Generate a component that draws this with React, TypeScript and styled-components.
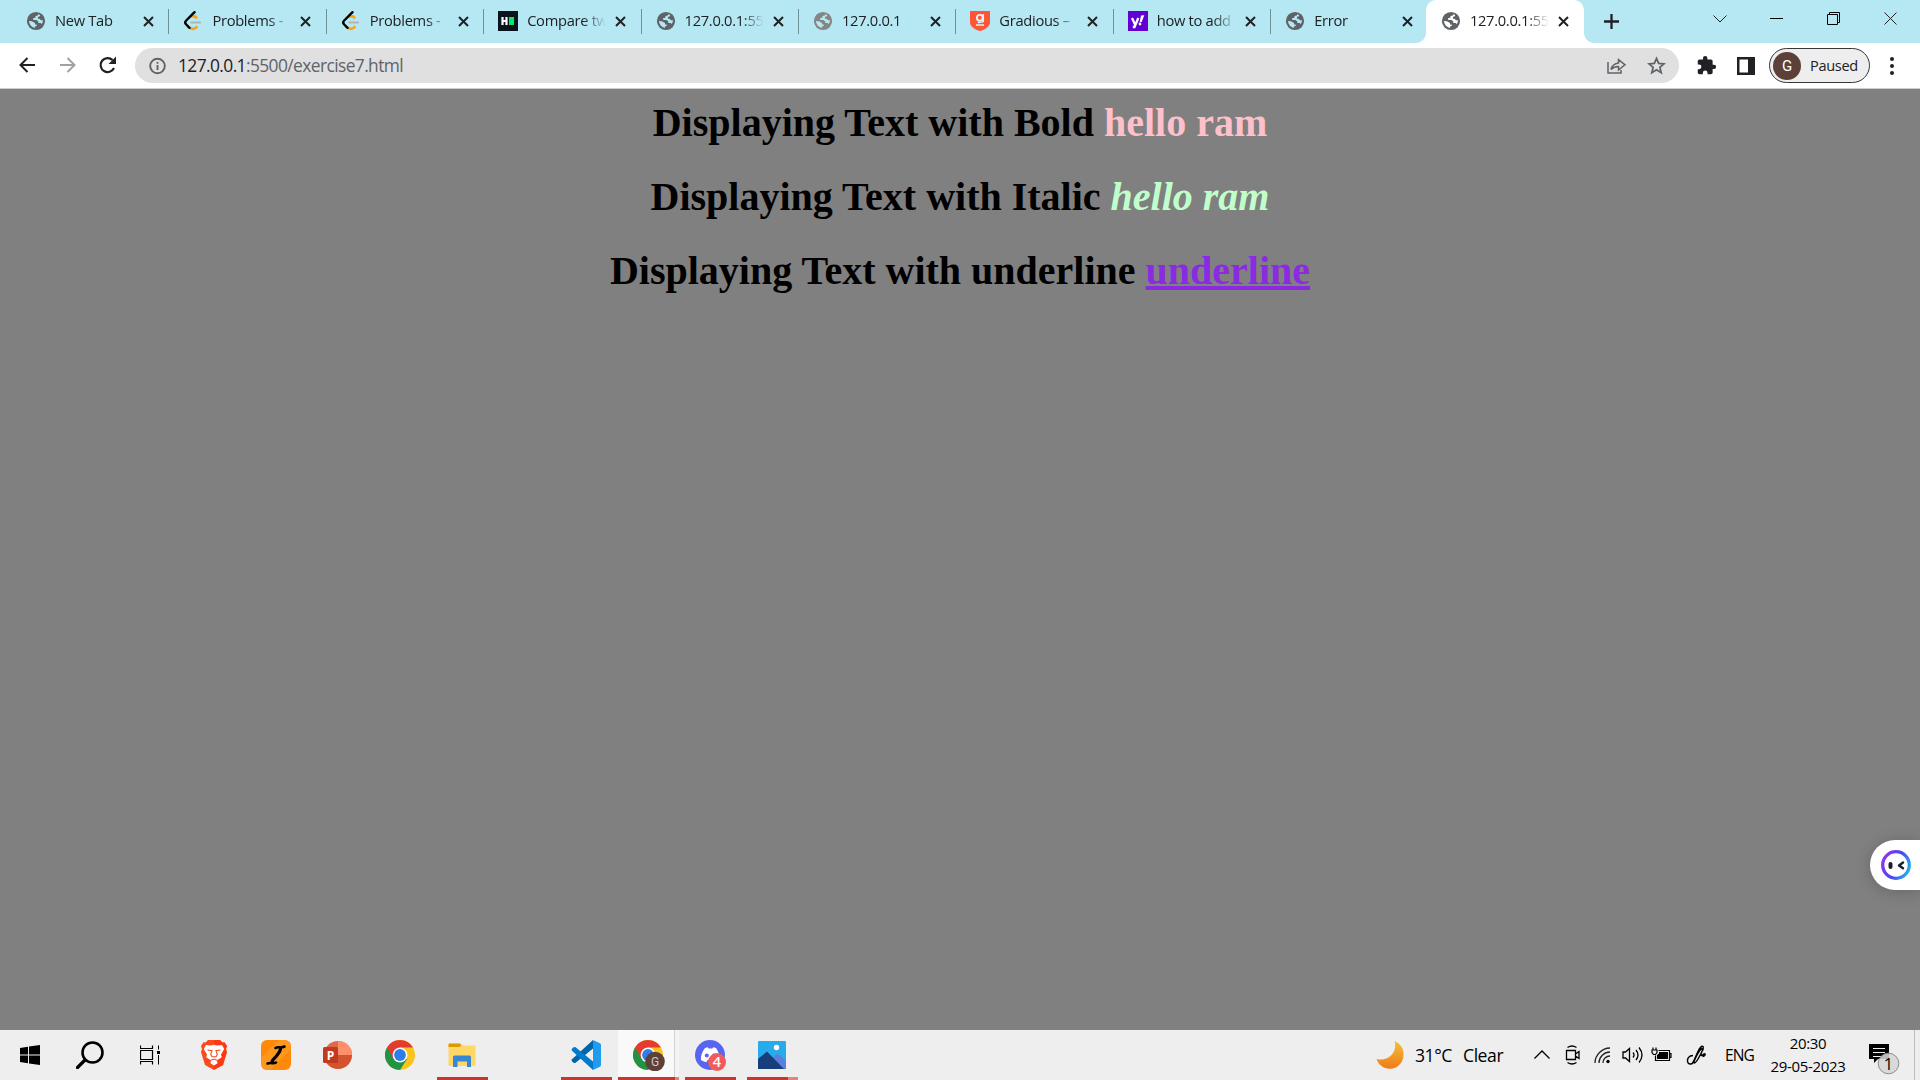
import React from "react";
import styled, { createGlobalStyle } from "styled-components";

const ui = `"Open Sans", "Noto Sans", "Liberation Sans", sans-serif`;

const Global = createGlobalStyle`
  * { box-sizing: border-box; }
  html, body { margin: 0; padding: 0; overflow: hidden; }
  svg { display: block; flex: none; }
`;

const Screen = styled.div`
  width: 1920px; height: 1080px; display: flex; flex-direction: column;
  background: #808080; font-family: ${ui}; color: #202124; position: relative; overflow: hidden;
`;
const TabStrip = styled.div`
  height: 43px; flex: none; display: flex; align-items: stretch; padding-left: 11px; background: #b5e8f3;
`;
const Tab = styled.div<{ $active?: boolean }>`
  width: ${(p) => (p.$active ? 158 : 157.4)}px; flex: none; display: flex; align-items: center;
  padding-left: 15px; padding-bottom: 1px; position: relative;
  background: ${(p) => (p.$active ? "#fff" : "transparent")};
  border-radius: 10px 10px 0 0;
  margin-left: ${(p) => (p.$active ? -1.6 : 0)}px;
`;
const Divider = styled.i`
  position: absolute; right: -1px; top: 9px; width: 1px; height: 25px; background: #6f8f96;
`;
const Flare = styled.i<{ $side: "left" | "right" }>`
  position: absolute; bottom: 0; width: 10px; height: 10px;
  ${(p) => (p.$side === "left" ? "left: -10px;" : "right: -10px;")}
  background: radial-gradient(circle at ${(p) => (p.$side === "left" ? "0 0" : "100% 0")}, #b5e8f3 9.5px, #fff 10.2px);
`;
const TabTitle = styled.span`
  width: 79px; margin-left: 9px; overflow: hidden; white-space: nowrap; font-size: 14.7px;
  line-height: 22px; letter-spacing: -0.3px; padding-bottom: 2px;
  mask-image: linear-gradient(90deg, #000 56px, transparent 79px);
`;
const CloseSlot = styled.span`display: flex; margin-left: 9px; padding-top: 1px;`;
const NewTab = styled.div`display: flex; align-items: center; margin-left: 20px;`;
const WindowButtons = styled.div`
  margin-left: auto; display: flex; height: 37px; align-items: center;
`;
const WindowButton = styled.div`
  width: 57.2px; display: flex; justify-content: center;
`;

const Toolbar = styled.div`
  height: 46px; flex: none; background: #fff; border-bottom: 1px solid #cdcdcd; display: flex;
  align-items: center; padding: 0 17px 0 16px;
`;
const NavButton = styled.div`width: 40px; display: flex; padding-bottom: 1px;`;
const Omnibox = styled.div`
  width: 1544px; height: 35px; border-radius: 18px; background: #e0e0e0; display: flex; align-items: center;
  padding: 0 13px; margin-left: -1px;
`;
const Url = styled.span`
  margin-left: 12px; flex: 1; font-size: 17.4px; letter-spacing: -0.6px; line-height: 24px; padding-bottom: 1px;
  color: #5f6368; white-space: nowrap;
  b { font-weight: 400; color: #202124; }
`;
const OmniIcons = styled.div`display: flex; gap: 20px; align-items: center;`;
const Actions = styled.div`display: flex; align-items: center; gap: 13px; margin-left: 17px;`;
const PanelIcon = styled.svg`margin-left: 7px;`;
const Profile = styled.div`
  margin-left: 1px; width: 101px; height: 35px; border: 1.5px solid #35383b; border-radius: 18px; background: #eee;
  display: flex; align-items: center; padding-left: 3px; 
`;
const ProfileState = styled.span`
  font-size: 14.6px; letter-spacing: -0.35px; line-height: 20px; padding-bottom: 2px;
`;
const Avatar = styled.span`
  width: 28px; height: 28px; border-radius: 50%; background: #5d4037; color: #fff; margin-right: 9px;
  display: flex; align-items: center; justify-content: center; font: 15px Roboto, sans-serif;
`;
const Dots = styled.div`
  margin-left: 7px; display: flex; flex-direction: column; gap: 3px;
  i { width: 4px; height: 4px; border-radius: 50%; background: #202124; }
`;

const Page = styled.main`
  flex: 1; padding-top: 11px; font-family: "Liberation Serif", serif; text-align: center; color: #000;
`;
const Heading = styled.h1`
  margin: 0 0 28px; font-size: 40px; line-height: 46px; font-weight: 700;
`;
const Tint = styled.span<{ $color: string }>`color: ${(p) => p.$color};`;

const Assistant = styled.div`
  position: absolute; right: 0; top: 840px; width: 50px; height: 50px; border-radius: 25px 0 0 25px; background: #fff;
  display: flex; align-items: center; padding-left: 11px; box-shadow: 0 2px 16px rgba(0, 0, 0, 0.2);
`;

const Taskbar = styled.footer`
  height: 50px; flex: none; background: #eee; display: flex; color: #000;
`;
const Launcher = styled.div<{ $w?: number }>`
  width: ${(p) => p.$w ?? 62}px; flex: none; display: flex; align-items: center; justify-content: center;
`;
const Running = styled(Launcher)<{ $bar: number; $more?: number; $on?: boolean }>`
  position: relative;
  ${(p) => p.$on && "background: linear-gradient(90deg, #f9f9f9 56px, #d2d2d2 56px, #d2d2d2 57px, #f3f3f3 57px); padding-left: 2px;"}
  &::after {
    content: ""; position: absolute; bottom: 0; width: ${(p) => p.$bar + (p.$more ?? 0)}px; height: 3px;
    left: calc(50% - ${(p) => (p.$bar + (p.$more ?? 0)) / 2}px);
    background: linear-gradient(90deg, #c8372b ${(p) => p.$bar}px, #e0857d ${(p) => p.$bar}px);
  }
`;
const StartGroup = styled.div`display: flex; margin-right: 3px;`;
const Tray = styled.div`margin-left: auto; display: flex; align-items: center; white-space: nowrap;`;
const Weather = styled.div`
  display: flex; align-items: center; font-size: 17.6px; line-height: 24px; letter-spacing: -0.45px; width: 158px;
`;
const Temp = styled.span`margin-left: 11px; width: 48px;`;
const TrayIcons = styled.div`
  display: grid; grid-template-columns: 31px 29px 28px 29px 35px 39px; align-items: center; width: 191px;
`;
const Lang = styled.div`font-size: 15.6px; letter-spacing: -0.9px; width: 45px;`;
const Clock = styled.div`
  width: 76px; font-size: 15px; line-height: 23px; letter-spacing: -0.35px;
  display: flex; flex-direction: column; align-items: center;
`;
const Notice = styled.div`margin-left: 23px; width: 45px; padding-top: 10px;`;
const ShowDesktop = styled.div`width: 6px; height: 50px; border-left: 1px solid #bdbdbd;`;

const Globe = ({ c = "#5f6368", land = "#b5e8f3" }: { c?: string; land?: string }) => (
  <svg width="20" height="20" viewBox="0 0 20 20">
    <circle cx="10" cy="10" r="9.100" fill={c} />
    <path d="M12.200 3.200 11.800 4.600 9.600 5 9.300 6.700 7 7.200 7.300 8.900H10.600l1.700 1.500v1.700h2.600l.8 1.200A7 7 0 0 0 17 9.300l-2-.1-1.500-1.500h-1.600V6l1.900-.7.400-1.200z" fill={land} />
    <path d="M3 10 5.800 10.200 9 11.900v1.600H10.700V15l-1.800.6v1.400A7.100 7.100 0 0 1 3 10z" fill={land} />
  </svg>
);
const Leet = () => (
  <svg width="20" height="20" viewBox="0 0 20 20" fill="none" strokeWidth="2.2">
    <path d="M7.800 6.200c2-1.800 4-1.400 6.200 1.200" stroke="#f9a11b" strokeWidth="2.600" />
    <path d="M14.200 15.200c-2 3-5.300 3.600-7.600 1.200" stroke="#f9a11b" strokeWidth="2.600" />
    <path d="M11.500 1.200 3.200 9.500c-1.300 1.300-1.300 2.700 0 4l3.300 3.300" stroke="#000" strokeWidth="2.400" strokeLinecap="round" />
    <path d="M8.500 11.500H17" stroke="#b3b3b3" strokeLinecap="round" />
  </svg>
);
const Hacker = () => (
  <svg width="20" height="20">
    <rect width="20" height="20" fill="#0b141d" />
    <path d="M4.500 6v8M8.500 6v8M4.500 10h4" stroke="#fff" strokeWidth="2.200" />
    <path d="M11 6h5v8h-5z" fill="#00ea64" />
  </svg>
);
const Gradious = () => (
  <svg width="20" height="20" fill="none">
    <path d="M0 0h20v11c0 5-5 7.500-10 9C5 18.500 0 16 0 11z" fill="#ff5436" />
    <circle cx="9.800" cy="6.800" r="2.900" stroke="#d6f2f6" strokeWidth="1.900" />
    <path d="M13.200 3v7.500c-1 1-4 .8-5.500.8M6 14h8" stroke="#d6f2f6" strokeWidth="1.700" />
  </svg>
);
const Yahoo = () => (
  <svg width="20" height="20">
    <rect width="20" height="20" fill="#6001d2" />
    <path d="m4 7 3 6.500M10.300 7 6.500 16H4.800" stroke="#fff" strokeWidth="2.300" fill="none" />
    <path d="m13 4.500 3.300-.3-2.600 6.800h-2z" fill="#fff" />
    <circle cx="12" cy="13" r="1.400" fill="#fff" />
  </svg>
);
const Close = () => (
  <svg width="11" height="11" stroke="#202124" strokeWidth="2"><path d="m1 1 9 9M10 1l-9 9" /></svg>
);

const tabs: { icon: React.ReactNode; title: string; active?: boolean }[] = [
  { icon: <Globe />, title: "New Tab" },
  { icon: <Leet />, title: "Problems -" },
  { icon: <Leet />, title: "Problems -" },
  { icon: <Hacker />, title: "Compare tw" },
  { icon: <Globe />, title: "127.0.0.1:55" },
  { icon: <Globe c="#858585" />, title: "127.0.0.1" },
  { icon: <Gradious />, title: "Gradious –" },
  { icon: <Yahoo />, title: "how to add" },
  { icon: <Globe />, title: "Error" },
  { icon: <Globe land="#fff" />, title: "127.0.0.1:55", active: true },
];

const ChromeIcon = ({ badge }: { badge?: boolean }) => (
  <svg width={badge ? 33 : 30} height="32" viewBox={badge ? "0 0 33 32" : "0 0 30 32"}>
    <circle cx="15" cy="16" r="15" fill="#fcc31e" />
    <path d="M15 16 2 8.500A15 15 0 0 0 15 31l7-11z" fill="#229342" />
    <path d="M2 8.500A15 15 0 0 1 28 8.500H15L8.500 19.700z" fill="#e33b2e" />
    <circle cx="15" cy="16" r="7.400" fill="#fff" />
    <circle cx="15" cy="16" r="5.900" fill="#2f7de9" />
    {badge && (
      <>
        <circle cx="22" cy="22.500" r="9.800" fill="#5d4037" />
        <text x="22" y="27" textAnchor="middle" fontSize="12" fontFamily="Roboto" fill="#d0c8c5">G</text>
      </>
    )}
  </svg>
);
const WindowsIcon = () => (
  <svg width="20" height="20"><path d="M0 3 8 1.800V9.500H0zM9 1.600 20 0v9.500H9zM0 10.500h8v7.700L0 17zM9 10.500h11V20L9 18.400z" /></svg>
);
const SearchIcon = () => (
  <svg width="28" height="28" fill="none" stroke="#000"><circle cx="16.500" cy="11.500" r="10" strokeWidth="2.600" /><path d="m9 19-7.500 7.500" strokeWidth="3.200" strokeLinecap="round" /></svg>
);
const TaskViewIcon = () => (
  <svg width="20" height="20" fill="none" stroke="#000">
    <path d="M.5.500v3h12v-3M.5 19.500v-3h12v3M.5 5.500h12v9H.5z" strokeWidth="1.200" />
    <path d="M18.500.500v4M18.500 10v9.500" /><path d="M17 6h3v3h-3z" fill="#000" stroke="none" />
  </svg>
);
const BraveIcon = () => (
  <svg width="26" height="30" viewBox="0 0 26 30">
    <path d="M7 0h12l2.500 2.600 2-.3L26 6l-1 3 1 3-4 13-9 5-9-5L0 12l1-3-1-3 2.500-3.700 2 .3z" fill="#fb4a1c" />
    <path d="M19 0l2.500 2.600 2-.3L26 6l-1 3 1 3-4 13-9 5V0z" fill="#ff2b0c" opacity=".55" />
    <path d="m5 5 5 .6 3-.8 3 .8 5-.6 2.200 4-3.200 5.500.8 2.700-4.800 3 .5 3L13 25.500 9.500 23.200l.5-3-4.800-3 .8-2.700L2.800 9z" fill="#fff" />
    <path d="m6.500 10 4.500.8-1.300 3.700 1.300 2.300h4l1.300-2.300-1.300-3.700 4.500-.8M10 20.300l3-1.300 3 1.300" fill="none" stroke="#fb4a1c" strokeWidth="1.100" />
  </svg>
);
const InkIcon = () => (
  <svg width="30" height="30">
    <rect width="30" height="30" rx="6" fill="#ff8a0a" />
    <path d="M0 18 18 0h6a6 6 0 0 1 6 6v3L9 30H6a6 6 0 0 1-6-6z" fill="#ffa22c" opacity=".55" />
    <path d="M14.500 8c2.500-2 5 .5 9-1.500M6.500 23.500c4-1.500 6 .8 8.500-1" fill="none" stroke="#000" strokeWidth="2.600" strokeLinecap="round" />
    <path d="M19.500 7.500c.5 4-2.500 6-4 8.500s-4.500 3-4.500 6.500" fill="none" stroke="#000" strokeWidth="3.200" />
  </svg>
);
const PowerPointIcon = () => (
  <svg width="30" height="28">
    <circle cx="15" cy="14" r="14" fill="#e3674a" />
    <path d="M15 0a14 14 0 0 1 14 14H15z" fill="#ff8f6b" /><path d="M29 14a14 14 0 0 1-27 5l13-5z" fill="#d35230" />
    <rect y="6" width="15" height="16" rx="1.500" fill="#c03b1e" />
    <text x="7.500" y="18.500" textAnchor="middle" fontFamily="Open Sans" fontWeight="700" fontSize="12" fill="#fff">P</text>
  </svg>
);
const ExplorerIcon = () => (
  <svg width="28" height="24">
    <path d="M.5 1.500Q.5.500 1.500.500H12l2 2h12.500q1 0 1 1V22q0 1-1 1h-25q-1 0-1-1z" fill="#ffd765" />
    <path d="M.5 4V1.500q0-1 1-1H12l1.500 1.700L11.500 4z" fill="#dd9a00" />
    <path d="M5 24V14q0-1.500 1.500-1.500h15Q23 12.500 23 14v10h-4v-5.500H9.500V24z" fill="#3787d4" />
  </svg>
);
const CodeIcon = () => (
  <svg width="30" height="30">
    <path d="M22 0 1 19.200q-1 1 0 2l1.600 1.500q1 .7 2 0L22 8.500z" fill="#0065a9" />
    <path d="M22 30 1 10.800q-1-1 0-2l1.600-1.500q1-.7 2 0L22 21.500z" fill="#007acc" />
    <path d="m22 0 7 3.200q1 .6 1 1.800v20q0 1.200-1 1.800L22 30z" fill="#1f9cf0" />
  </svg>
);
const DiscordIcon = () => (
  <svg width="31" height="32" viewBox="0 0 31 32">
    <circle cx="15" cy="16" r="15" fill="#5865f2" />
    <path d="m10 9 2.800-.8.8 1.400h3.800l.8-1.400L21 9c2.500 3.500 4 7.500 3.800 12-1.800 1.400-3.500 2-5 2.300L18.500 21h-6l-1.200 2.300C9 22.800 7.500 22 6 21c-.4-4.500 1.200-8.500 4-12z" fill="#fff" />
    <circle cx="11.800" cy="16.500" r="2" fill="#5865f2" /><circle cx="19" cy="16.500" r="2" fill="#5865f2" />
    <circle cx="22" cy="23" r="9" fill="#f15b5b" />
    <text x="22" y="28" textAnchor="middle" fontFamily="Open Sans" fontWeight="600" fontSize="14.500" fill="#fff">4</text>
  </svg>
);
const PhotosIcon = () => (
  <svg width="28" height="28">
    <rect width="28" height="28" rx="1" fill="#28abea" />
    <path d="m13 18 6.500-5.500L28 20v8H13z" fill="#5a7fdc" />
    <path d="M0 18 9 10.500 26 28H0z" fill="#173f7c" /><circle cx="18.500" cy="6.500" r="2.700" fill="#fff" />
  </svg>
);
const Moon = () => (
  <svg width="28" height="30" viewBox="0 0 28 30">
    <defs><linearGradient id="moon" x1="0" y1="0" x2="0" y2="1"><stop stopColor="#f2c13c" /><stop offset="1" stopColor="#f07a16" /></linearGradient></defs>
    <path d="M18.500 1C25 4 28 9 27.500 15.500 27 23 21.500 28.500 14 28.800 8 29 2.500 25 .500 19c5 1.200 10.500.5 14.500-3.500S20 6 18.500 1z" fill="url(#moon)" />
  </svg>
);
const FaceIcon = () => (
  <svg width="30" height="30">
    <defs><linearGradient id="ring" x1="0" y1=".4" x2="1" y2=".8"><stop stopColor="#8b35f0" /><stop offset=".5" stopColor="#4548f5" /><stop offset="1" stopColor="#20b7e8" /></linearGradient></defs>
    <circle cx="15" cy="15" r="13.300" fill="#fff" stroke="url(#ring)" strokeWidth="3.300" />
    <rect x="7.500" y="12" width="4" height="7" rx="2" fill="#17202b" />
    <path d="m22 12.500-4 3 4 2.800" fill="none" stroke="#17202b" strokeWidth="2.400" strokeLinecap="round" strokeLinejoin="round" />
  </svg>
);

export default function App() {
  return (
    <Screen>
      <Global />
      <TabStrip>
        {tabs.map((t, i) => (
          <Tab key={i} $active={t.active}>
            {t.icon}
            <TabTitle>{t.title}</TabTitle>
            <CloseSlot><Close /></CloseSlot>
            {i < 8 && <Divider />}
            {t.active && <><Flare $side="left" /><Flare $side="right" /></>}
          </Tab>
        ))}
        <NewTab><svg width="15" height="15" stroke="#202124" strokeWidth="2.300"><path d="M7.500 0v15M0 7.500h15" /></svg></NewTab>
        <WindowButtons>
          <WindowButton><svg width="14" height="8" fill="none" stroke="#222"><path d="m.5.5 6.500 6.500L13.500.5" /></svg></WindowButton>
          <WindowButton><svg width="14" height="1"><path d="M0 0h13v1H0z" /></svg></WindowButton>
          <WindowButton><svg width="14" height="13" fill="none" stroke="#000"><path d="M.5 2.500h10v10H.5zM2.500 2.500v-2h10v10h-2" /></svg></WindowButton>
          <WindowButton><svg width="14" height="13" stroke="#222"><path d="m.5.5 12 12M12.500.5l-12 12" /></svg></WindowButton>
        </WindowButtons>
      </TabStrip>
      <Toolbar>
        <NavButton><svg width="22" height="20" fill="none" stroke="#202124" strokeWidth="2"><path d="M19 10H5M11.500 3 4.500 10l7 7" /></svg></NavButton>
        <NavButton><svg width="22" height="20" fill="none" stroke="#a0a1a3" strokeWidth="2"><path d="M4 10h14M11.500 3l7 7-7 7" /></svg></NavButton>
        <NavButton><svg width="22" height="20" fill="none" stroke="#202124" strokeWidth="2.200"><path d="M18 13a7 7 0 1 1-1.500-8" /><path d="M20 1.500V9h-7.500z" fill="#202124" stroke="none" /></svg></NavButton>
        <Omnibox>
          <svg width="18" height="18" fill="none" stroke="#5f6368" strokeWidth="1.900"><circle cx="9.500" cy="9" r="7.300" /><path d="M9.500 8v5M9.500 5v1.800" /></svg>
          <Url><b>127.0.0.1</b>:5500/exercise7.html</Url>
          <OmniIcons>
            <svg width="21" height="20" fill="none" stroke="#5f6368" strokeWidth="1.500"><path d="M2 6v11h13v-3M5 13.500C6 9.500 8.500 7.500 12.500 7V3.500l6.500 5.300-6.500 5.200v-3.500c-3.500 0-5.500.8-7.500 3z" /></svg>
            <svg width="19" height="19" viewBox="0 0 24 24" fill="none" stroke="#5f6368" strokeWidth="2.200"><path d="m12 3 2.700 6.300 6.800.6-5.200 4.500 1.600 6.700L12 17.500l-5.900 3.600 1.600-6.700-5.200-4.500 6.800-.6z" /></svg>
          </OmniIcons>
        </Omnibox>
        <Actions>
          <svg width="21" height="21" viewBox="0 0 24 24" fill="#202124"><path d="M20.500 11H19V7c0-1.100-.9-2-2-2h-4V3.500a2.500 2.500 0 0 0-5 0V5H4c-1.100 0-2 .9-2 2v3.800h1.500a2.700 2.700 0 0 1 0 5.400H2V20c0 1.100.9 2 2 2h3.800v-1.500a2.700 2.700 0 0 1 5.400 0V22H17c1.100 0 2-.9 2-2v-4h1.500a2.500 2.500 0 0 0 0-5z" /></svg>
          <PanelIcon width="18" height="18"><path d="M0 0h18v18H0zM2.500 2.500v13h8.500v-13z" fill="#202124" fillRule="evenodd" /></PanelIcon>
          <Profile><Avatar>G</Avatar><ProfileState>Paused</ProfileState></Profile>
          <Dots><i /><i /><i /></Dots>
        </Actions>
      </Toolbar>
      <Page>
        <Heading>Displaying Text with Bold <Tint $color="#ffc0cb">hello ram</Tint></Heading>
        <Heading>Displaying Text with Italic <Tint as="i" $color="#c0ffcb">hello ram</Tint></Heading>
        <Heading>Displaying Text with underline <Tint as="u" $color="#8a2be2">underline</Tint></Heading>
      </Page>
      <Assistant><FaceIcon /></Assistant>
      <Taskbar>
        <StartGroup>
          <Launcher $w={60}><WindowsIcon /></Launcher>
          <Launcher $w={60}><SearchIcon /></Launcher>
          <Launcher $w={60}><TaskViewIcon /></Launcher>
        </StartGroup>
        <Launcher><BraveIcon /></Launcher>
        <Launcher><InkIcon /></Launcher>
        <Launcher><PowerPointIcon /></Launcher>
        <Launcher><ChromeIcon /></Launcher>
        <Running $bar={51}><ExplorerIcon /></Running>
        <Launcher />
        <Running $bar={51}><CodeIcon /></Running>
        <Launcher $w={1} />
        <Running $w={61} $bar={57} $more={4} $on><ChromeIcon badge /></Running>
        <Running $bar={51}><DiscordIcon /></Running>
        <Running $bar={41} $more={10}><PhotosIcon /></Running>
        <Tray>
          <Weather><Moon /><Temp>31°C</Temp>Clear</Weather>
          <TrayIcons>
            <svg width="17" height="10" fill="none" stroke="#000" strokeWidth="1.300"><path d="m.5 8.500 7.500-7.500 7.500 7.500" /></svg>
            <svg width="16" height="20" fill="none" stroke="#000" strokeWidth="1.300"><path d="M1.500 5.500h9v9h-9zM10.500 9l3.500-2.500v7L10.500 11M2.500 2.500c3-2 6-2 9 0M2.500 17.500c3 2 6 2 9 0" /></svg>
            <svg width="17" height="17" fill="none" stroke="#222" strokeWidth="1.300"><path d="M1 16C1 8 8 1 16 1M5 16C5 10 10 5 16 5M9 16c0-4 3-7 7-7" /><circle cx="14" cy="14.500" r="1.700" fill="#000" stroke="none" /></svg>
            <svg width="22" height="18" fill="none" stroke="#000" strokeWidth="1.300"><path d="M1 6h2.500l4-3.500v13l-4-3.500H1zM11 6.500q2 2.500 0 5M14 4q4 5 0 10M17 1.500q6 7.500 0 15" /></svg>
            <svg width="22" height="16" fill="none" stroke="#000" strokeWidth="1.200">
              <path d="M7.500 3.500h11v10h-14V8.500M19 6.500h1v4h-1" />
              <path d="M2 .5v2.500M5 .5v2.500M1 3h5v2.500L4.500 7.500h-2L1 5.500z" />
              <path d="M8 5h9v7H6V8l2-1.500z" fill="#000" stroke="none" />
            </svg>
            <svg width="22" height="21" fill="none" stroke="#000" strokeWidth="1.500"><path d="M7 10.500c-4 0-6 3-5.500 6s4 3.500 5.500 1 3-7 5-11 4-6 5-5 0 3-2 7-5 9.500-6.500 9.500.5-4 2.500-8 4-7 6-6.500c1 .5-3 5-2 6.500s3-2 4-1-1.500 2.500-2.500 2.500" /></svg>
          </TrayIcons>
          <Lang>ENG</Lang>
          <Clock><span>20:30</span><span>29-05-2023</span></Clock>
          <Notice>
            <svg width="32" height="32">
              <path d="M0 0h20v15H9l-4 4v-4H0z" /><path d="M4 4.500h12M4 8.500h12M4 12.500h8" stroke="#eee" strokeWidth="1.200" />
              <circle cx="19.500" cy="19.500" r="10.300" fill="#d6d6d6" fillOpacity=".88" stroke="#8c8c8c" />
              <text x="19.500" y="25.500" textAnchor="middle" fontFamily="Open Sans" fontSize="16.500" fill="#000">1</text>
            </svg>
          </Notice>
          <ShowDesktop />
        </Tray>
      </Taskbar>
    </Screen>
  );
}
